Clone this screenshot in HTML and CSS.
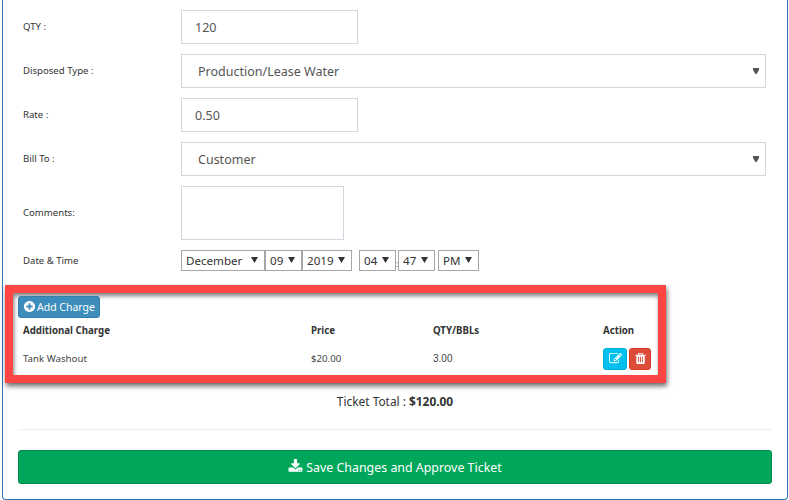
FILE: index.html
```html
<!DOCTYPE html>
<html lang="en">
<head>
<meta charset="utf-8">
<title>Ticket</title>
<link rel="stylesheet" href="styles.css">
</head>
<body>
<form class="panel">
  <div class="row"><label class="label">QTY :</label><input class="control short" value="120"></div>
  <div class="row"><label class="label">Disposed Type :</label><select class="control wide"><option>Production/Lease Water</option></select></div>
  <div class="row"><label class="label">Rate :</label><input class="control short" value="0.50"></div>
  <div class="row"><label class="label">Bill To :</label><select class="control wide"><option>Customer</option></select></div>
  <div class="row"><label class="label">Comments:</label><textarea class="control area"></textarea></div>
  <div class="row date-row"><label class="label">Date &amp; Time</label>
    <div class="date-group">
      <select class="mini month"><option>December</option></select>
      <select class="mini day"><option>09</option></select>
      <select class="mini year"><option>2019</option></select>
      <select class="mini hour"><option>04</option></select>
      <span class="colon">:</span>
      <select class="mini minute"><option>47</option></select>
      <select class="mini ampm"><option>PM</option></select>
    </div>
  </div>
  <section class="charges">
    <button type="button" class="btn add"><svg class="icon" viewBox="0 0 1792 1792"><path d="M1344 960v-128q0-26-19-45t-45-19h-256v-256q0-26-19-45t-45-19h-128q-26 0-45 19t-19 45v256h-256q-26 0-45 19t-19 45v128q0 26 19 45t45 19h256v256q0 26 19 45t45 19h128q26 0 45-19t19-45v-256h256q26 0 45-19t19-45zm320-64q0 209-103 385.5t-279.5 279.5-385.5 103-385.5-103-279.5-279.5-103-385.5 103-385.5 279.5-279.5 385.5-103 385.5 103 279.5 279.5 103 385.5z"/></svg>Add Charge</button>
    <table class="charge-table">
      <thead><tr><th class="c-name">Additional Charge</th><th class="c-price">Price</th><th class="c-qty">QTY/BBLs</th><th>Action</th></tr></thead>
      <tbody><tr><td>Tank Washout</td><td>$20.00</td><td class="num">3.00</td><td class="actions">
        <button type="button" class="btn edit"><svg class="icon" viewBox="0 0 1792 1792"><path d="M888 1184l116-116-152-152-116 116v56h96v96h56zm440-720q-16-16-33 1l-350 350q-17 17-1 33t33-1l350-350q17-17 1-33zm80 594v190q0 119-84.5 203.5t-203.5 84.5h-832q-119 0-203.5-84.5t-84.5-203.5v-832q0-119 84.5-203.5t203.5-84.5h832q63 0 117 25 15 7 18 23 3 17-9 29l-49 49q-14 14-32 8-23-6-45-6h-832q-66 0-113 47t-47 113v832q0 66 47 113t113 47h832q66 0 113-47t47-113v-126q0-13 9-22l64-64q15-15 35-7t20 29zm-96-738l288 288-672 672h-288v-288zm444 132l-92 92-288-288 92-92q28-28 68-28t68 28l152 152q28 28 28 68t-28 68z"/></svg></button>
        <button type="button" class="btn del"><svg class="icon" viewBox="0 0 1792 1792"><path d="M704 1376v-704q0-14-9-23t-23-9h-64q-14 0-23 9t-9 23v704q0 14 9 23t23 9h64q14 0 23-9t9-23zm256 0v-704q0-14-9-23t-23-9h-64q-14 0-23 9t-9 23v704q0 14 9 23t23 9h64q14 0 23-9t9-23zm256 0v-704q0-14-9-23t-23-9h-64q-14 0-23 9t-9 23v704q0 14 9 23t23 9h64q14 0 23-9t9-23zm-544-992h448l-48-117q-7-9-17-11h-317q-10 2-17 11zm928 32v64q0 14-9 23t-23 9h-96v948q0 83-47 143.5t-113 60.5h-832q-66 0-113-58.5t-47-141.5v-952h-96q-14 0-23-9t-9-23v-64q0-14 9-23t23-9h309l70-167q15-37 54-63t79-26h320q40 0 79 26t54 63l70 167h309q14 0 23 9t9 23z"/></svg></button>
      </td></tr></tbody>
    </table>
  </section>
  <p class="total">Ticket Total : <b>$120.00</b></p>
  <hr class="rule">
  <button type="button" class="btn save"><svg class="icon" viewBox="0 0 1792 1792"><path d="M1344 1344q0-26-19-45t-45-19-45 19-19 45 19 45 45 19 45-19 19-45zm256 0q0-26-19-45t-45-19-45 19-19 45 19 45 45 19 45-19 19-45zm128-224v320q0 40-28 68t-68 28h-1472q-40 0-68-28t-28-68v-320q0-40 28-68t68-28h465l135 136q58 56 136 56t136-56l136-136h464q40 0 68 28t28 68zm-325-569q17 41-14 70l-448 448q-18 19-45 19t-45-19l-448-448q-31-29-14-70 17-39 59-39h256v-448q0-26 19-45t45-19h256q26 0 45 19t19 45v448h256q42 0 59 39z"/></svg>Save Changes and Approve Ticket</button>
</form>
</body>
</html>
```

FILE: styles.css
```css
* { box-sizing: border-box; }
html, body { margin: 0; padding: 0; background: #fff; }
body { font-family: "Noto Sans", "Open Sans", sans-serif; color: #333; overflow: hidden; }

.panel {
  display: flex;
  flex-direction: column;
  width: 786px;
  height: 500px;
  margin-left: 2px;
  padding: 10px 15px 0;
  border: 1px solid #2f76b5;
  border-top: 0;
  border-radius: 0 0 4px 4px;
}

.row {
  display: flex;
  align-items: center;
  margin-bottom: 10px;
}
.label {
  flex: none;
  width: 163px;
  padding: 0 0 2px 5px;
  font-size: 9.6px;
  color: #333;
}
.control {
  height: 34px;
  border: 1px solid #d2d6de;
  border-radius: 0;
  background: #fff;
  color: #555;
  font-family: inherit;
  font-size: 12.5px;
  padding: 0 13px;
  outline: none;
}
.short { width: 177px; }
.wide {
  width: 585px;
  padding-left: 16px;
  appearance: none;
  background-image: url("data:image/svg+xml,%3Csvg xmlns='http://www.w3.org/2000/svg' width='6' height='6'%3E%3Cpath d='M0 0h6v2L3.6 6H2.4L0 2z' fill='%23555'/%3E%3C/svg%3E");
  background-repeat: no-repeat;
  background-position: 571px 13px;
}
.area { width: 163px; height: 54px; resize: none; }

.date-row { margin-bottom: 14px; }
.date-row .label { padding-bottom: 0; }
.date-group { display: flex; align-items: center; height: 21px; }
.mini {
  height: 21px;
  border: 1px solid #a6a6a6;
  border-radius: 0;
  color: #333;
  font-family: inherit;
  font-size: 11.6px;
  padding: 0 0 0 4px;
  appearance: none;
  background: #fff url("data:image/svg+xml,%3Csvg xmlns='http://www.w3.org/2000/svg' width='7' height='6'%3E%3Cpath d='M0 0h7L3.5 6z' fill='%23333'/%3E%3C/svg%3E") no-repeat right 6px top 6px;
}
.month { width: 84px; }
.day { width: 37px; }
.year { width: 50px; }
.hour { width: 37px; margin-left: 7px; }
.colon { width: 2px; height: 21px; font-size: 9px; line-height: 27px; color: #777; }
.minute { width: 37px; }
.ampm { width: 41px; margin-left: 3px; }

.charges {
  width: 661px;
  height: 98px;
  margin-left: -13px;
  padding: 3px 0 0 5px;
  border: 8px solid #ff4444;
  box-shadow: 1px 3px 5px rgba(0, 0, 0, .6), inset 1px 3px 4px rgba(0, 0, 0, .5);
}

.btn {
  border: 1px solid transparent;
  border-radius: 3px;
  color: #fff;
  font-family: inherit;
  cursor: pointer;
}
.icon { fill: currentColor; display: inline-block; vertical-align: -2px; }

.add {
  display: block;
  width: 82px;
  height: 22px;
  padding: 0;
  background: #3c8dbc;
  border-color: #367fa9;
  font-size: 10.5px;
  white-space: nowrap;
}
.add .icon { width: 13px; height: 13px; margin-right: 1px; }

.charge-table {
  width: 630px;
  margin-left: 5px;
  border-collapse: collapse;
  table-layout: fixed;
  font-size: 9.7px;
}
.charge-table th { height: 24px; padding: 0; text-align: left; font-weight: 700; color: #333; }
.charge-table td { height: 33px; padding: 0; color: #444; }
.c-name { width: 288px; }
.c-price { width: 122px; }
.c-qty { width: 170px; }
.charge-table .num { font-family: "Liberation Sans", sans-serif; font-size: 10px; }
.actions { white-space: nowrap; font-size: 0; }
.edit, .del { display: inline-block; width: 24px; height: 22px; padding: 0; }
.edit { background: #00c0ef; border-color: #00acd6; }
.del { width: 22px; margin-left: 2px; background: #dd4b39; border-color: #d73925; }
.edit .icon, .del .icon { width: 13px; height: 13px; vertical-align: -1px; }

.total {
  margin: 10px 0 0;
  height: 17px;
  line-height: 17px;
  text-align: center;
  font-size: 11.9px;
  color: #333;
}
.rule {
  margin: 19px 0 20px;
  border: 0;
  border-top: 1px solid #eee;
  height: 1px;
}
.save {
  flex: none;
  width: 100%;
  height: 34px;
  background: #00a65a;
  border-color: #008d4c;
  font-size: 12.4px;
}
.save .icon { width: 15px; height: 15px; margin-right: 3px; }
```
